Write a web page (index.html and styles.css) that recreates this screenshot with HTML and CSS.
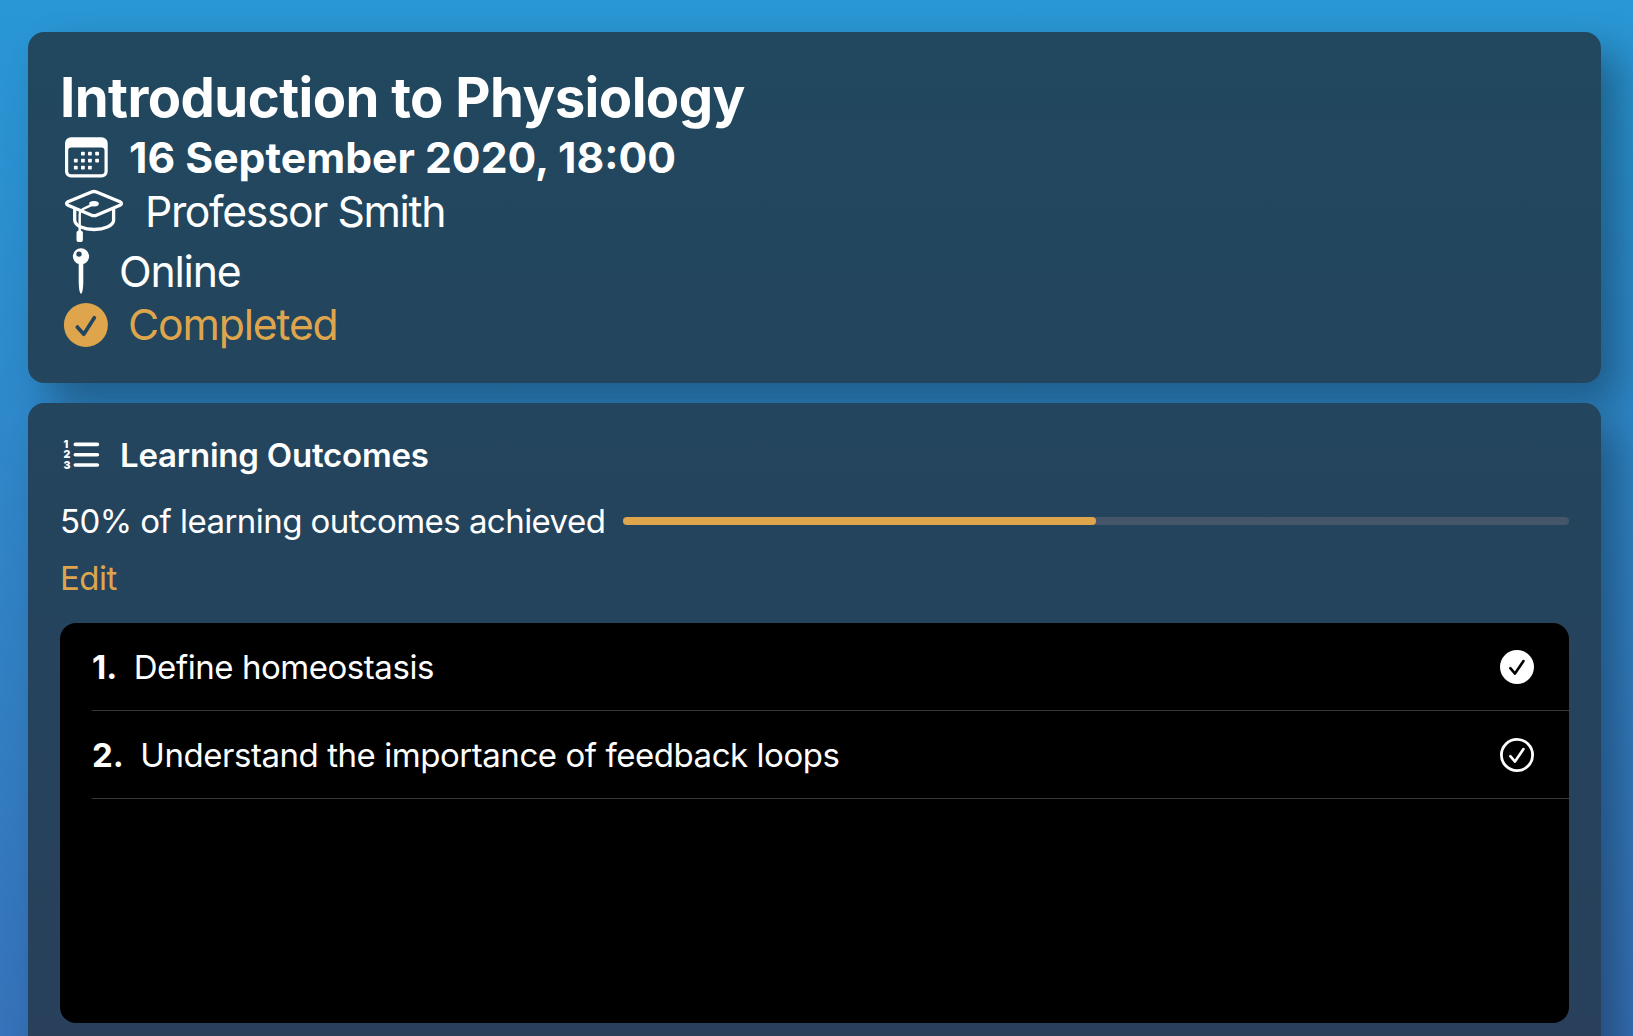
FILE: index.html
```html
<!DOCTYPE html>
<html lang="en">
<head>
<meta charset="utf-8">
<title>Introduction to Physiology</title>
<link rel="stylesheet" href="styles.css">
</head>
<body>
<main class="page">
  <section class="card summary">
    <h1 class="title"><span>Introduction to Physiology</span></h1>
    <div class="row date">
      <svg class="icon" width="69" height="53" viewBox="0 0 69 53">
        <path fill="currentColor" fill-rule="evenodd" d="M11 6.300H41.700a6 6 0 0 1 6 6V40.500a6 6 0 0 1-6 6H11a6 6 0 0 1-6-6V12.300a6 6 0 0 1 6-6ZM11.200 16.500a3 3 0 0 0-3 3V40.200a3 3 0 0 0 3 3H41.500a3 3 0 0 0 3-3V19.500a3 3 0 0 0-3-3Z"/>
        <g fill="currentColor">
          <rect x="21" y="20.800" width="3.800" height="3.800" rx=".8"/><rect x="28" y="20.800" width="3.800" height="3.800" rx=".8"/><rect x="35.200" y="20.800" width="3.800" height="3.800" rx=".8"/>
          <rect x="13.900" y="27.800" width="3.800" height="3.800" rx=".8"/><rect x="21" y="27.800" width="3.800" height="3.800" rx=".8"/><rect x="28" y="27.800" width="3.800" height="3.800" rx=".8"/><rect x="35.200" y="27.800" width="3.800" height="3.800" rx=".8"/>
          <rect x="13.900" y="34.800" width="3.800" height="3.800" rx=".8"/><rect x="21" y="34.800" width="3.800" height="3.800" rx=".8"/><rect x="28" y="34.800" width="3.800" height="3.800" rx=".8"/>
        </g>
      </svg>
      <span>16 September 2020, 18:00</span>
    </div>
    <div class="row teacher">
      <svg class="icon" width="85" height="53" viewBox="0 0 85 53">
        <g fill="none" stroke="currentColor" stroke-width="3.300" stroke-linejoin="round" stroke-linecap="round">
          <path d="M31.500 8Q34 7 36.500 8L60 17.800Q63 19.500 60 21.200L37 31Q34 32.400 31 31L8 21.200Q5 19.500 8 17.800Z"/>
          <path d="M14.700 25.500V36.500C15.500 42 24 45.500 34 45.500S53 42 53.600 36.500V25.500"/>
          <path stroke-width="2.400" d="M34 20C28 22.500 21.500 25 20.500 27Q19.700 28 19.700 31V47"/>
        </g>
        <ellipse cx="34" cy="19.800" rx="4.800" ry="2.700" fill="currentColor"/>
        <rect x="16.500" y="46.500" width="6.400" height="11.500" rx="2.600" fill="currentColor"/>
      </svg>
      <span>Professor Smith</span>
    </div>
    <div class="row place">
      <svg class="icon" width="59" height="66" viewBox="0 0 59 66">
        <path fill="currentColor" fill-rule="evenodd" d="M21 11.300a8 8 0 0 1 2.300 15.700V46Q23 54 21.600 56.500H20.400Q19 54 18.700 46V27A8 8 0 0 1 21 11.300ZM19 14.400a2.700 2.700 0 1 0 0 5.400a2.700 2.700 0 0 0 0-5.400Z"/>
      </svg>
      <span>Online</span>
    </div>
    <div class="row status">
      <svg class="icon" width="68" height="44" viewBox="0 0 68 44">
        <circle cx="25.900" cy="22" r="22" fill="currentColor"/>
        <path class="tick" stroke-width="3.700" d="M17.300 24L23.800 31.200L34.300 14.800"/>
      </svg>
      <span>Completed</span>
    </div>
  </section>

  <section class="card outcomes">
    <h2 class="heading">
      <svg class="icon" width="60" height="40" viewBox="0 0 60 40">
        <g class="digits"><text x="3.400" y="12.700">1</text><text x="3.400" y="23.100">2</text><text x="3.400" y="33.700">3</text></g>
        <path stroke="currentColor" stroke-width="3.600" stroke-linecap="round" d="M15.300 9.400H37.400M15.300 19.700H37.400M15.300 30H37.400"/>
      </svg>
      <span>Learning Outcomes</span>
    </h2>
    <div class="progress">
      <span class="progress-label">50% of learning outcomes achieved</span>
      <div class="track"><div class="fill" style="width: 50%"></div></div>
    </div>
    <div class="edit"><span>Edit</span></div>
    <ol class="list">
      <li class="item">
        <b class="number">1.</b><span class="item-text">Define homeostasis</span>
        <svg class="check" width="34" height="34" viewBox="0 0 34 34">
          <circle cx="17" cy="17" r="17" fill="#fff"/>
          <path fill="none" stroke="#000" stroke-width="2.600" stroke-linecap="round" stroke-linejoin="round" d="M10.300 18.200L15 23.600L23.500 11"/>
        </svg>
      </li>
      <li class="item">
        <b class="number">2.</b><span class="item-text">Understand the importance of feedback loops</span>
        <svg class="check" width="34" height="34" viewBox="0 0 34 34">
          <circle cx="17" cy="17" r="15.600" fill="none" stroke="#fff" stroke-width="2.800"/>
          <path fill="none" stroke="#fff" stroke-width="2.600" stroke-linecap="round" stroke-linejoin="round" d="M10.300 18.200L15 23.600L23.500 11"/>
        </svg>
      </li>
    </ol>
  </section>
</main>
</body>
</html>
```
FILE: styles.css
```css
* { box-sizing: border-box; }

body {
  margin: 0;
  height: 1036px;
  overflow: hidden;
  background: linear-gradient(#2997d5, #3672b9);
  color: #fff;
  font-family: Inter, "Liberation Sans", sans-serif;
  font-size: 33px;
  white-space: nowrap;
}

.page {
  display: flex;
  flex-direction: column;
  gap: 20px;
  height: 1070px;
  padding: 32px 32px 0 28px;
}

.card {
  flex: none;
  padding: 32px;
  border-radius: 16px;
  box-shadow: 20px 20px 40px rgba(0, 0, 0, 0.33);
}

.summary {
  height: 351px;
  background: linear-gradient(#21485f, #23455d);
  font-size: 42.700px;
}

.outcomes {
  height: 680px;
  background: linear-gradient(#23455d, #29405b);
}

.title, .heading { margin: 0; display: flex; align-items: center; }
.title {
  height: 67px;
  padding-bottom: 2px;
  font-size: 54.500px;
  font-weight: 700;
  letter-spacing: -0.580px;
}

.row { display: flex; align-items: center; }
.icon { flex: none; overflow: visible; }
.date { height: 53px; font-weight: 700; }
.teacher { height: 53px; letter-spacing: -1.380px; }
.teacher span { padding-top: 1px; }
.place { height: 66px; letter-spacing: -1.200px; }
.place span { padding-top: 3px; }
.status { height: 44px; color: #dea54d; letter-spacing: -1.170px; }
.status span { margin-top: -2px; }

.tick {
  fill: none;
  stroke: #23465e;
  stroke-linecap: round;
  stroke-linejoin: round;
}

.heading {
  height: 40px;
  font-size: 33px;
  font-weight: 600;
  letter-spacing: -0.220px;
}
.digits { fill: currentColor; font-size: 10.500px; font-weight: 900; }

.progress {
  display: flex;
  align-items: center;
  height: 41px;
  margin-top: 25px;
}
.progress-label { width: 563px; letter-spacing: -0.550px; }
.track { flex: 1; height: 8px; border-radius: 4px; background: #45566b; }
.fill { height: 8px; border-radius: 4px; background: #dea54d; }

.edit {
  display: flex;
  align-items: center;
  height: 42px;
  margin-top: 16px;
  color: #dea54d;
  letter-spacing: -0.500px;
}

.list {
  height: 400px;
  margin: 24px 0 0;
  padding: 0 0 0 32px;
  border-radius: 16px;
  background: #000;
  list-style: none;
}
.item {
  display: flex;
  align-items: center;
  height: 88px;
  padding-right: 35px;
  border-bottom: 1px solid #3a3a3c;
}
.number { font-weight: 700; margin-right: 16.500px; }
.item-text { letter-spacing: -0.450px; }
.check { margin-left: auto; }
```
